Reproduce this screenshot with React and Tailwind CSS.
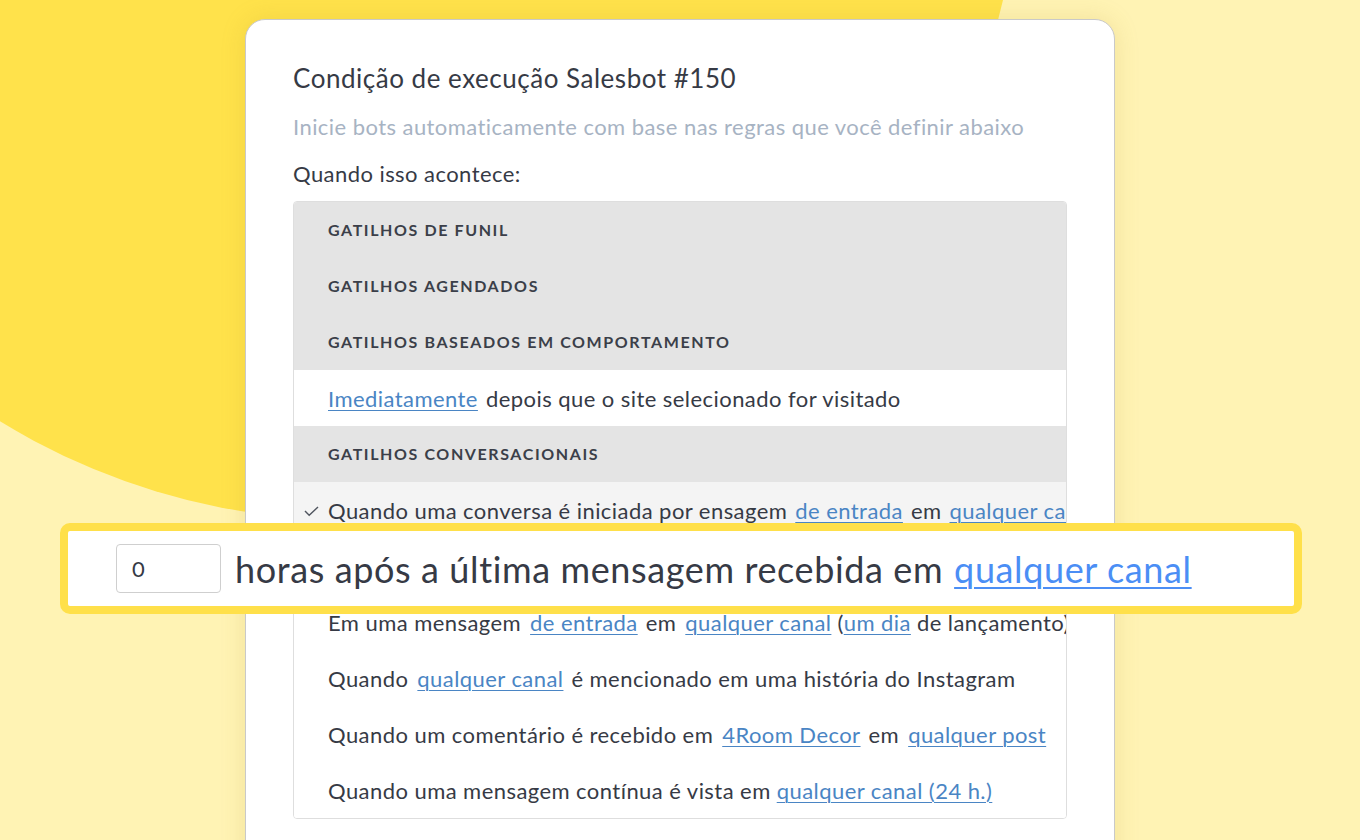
import React from 'react';

const A = ({ children, className = '' }) => (
  <a href="#" className={`text-[#4a85c4] underline underline-offset-[3px] decoration-1 ${className}`}>{children}</a>
);

const Header = ({ children }) => (
  <div className="h-[56px] flex items-center px-[34px] bg-[#e4e4e4] text-[16px] font-bold tracking-[0.1em] text-[#3b3f49] uppercase whitespace-nowrap">
    {children}
  </div>
);

const Row = ({ children, className = 'bg-white' }) => (
  <div className={`h-[56px] flex items-center px-[34px] text-[22px] tracking-[0.02em] text-[#363a45] whitespace-nowrap ${className}`}>
    {children}
  </div>
);

export default function App() {
  return (
    <div className="relative w-full h-[840px] overflow-hidden bg-[#fff3b4] font-['Lato','Roboto',sans-serif]">
      {/* background blob */}
      <div className="absolute left-[-320px] top-[-820px] w-[1340px] h-[1340px] rounded-full bg-[#ffe24b]" />

      <div className="relative mx-auto mt-[19px] w-[870px] h-[900px] bg-white rounded-[20px] border border-[#c9c9c9] shadow-[0_0_24px_rgba(180,150,40,0.18)] px-[47px] pt-[40px]">
        <h1 className="text-[26px] leading-[36px] tracking-[0.02em] text-[#363a45]">Condição de execução Salesbot #150</h1>
        <p className="mt-[17px] text-[22px] leading-[28px] tracking-[0.02em] text-[#a7b3c3] whitespace-nowrap">
          Inicie bots automaticamente com base nas regras que você definir abaixo
        </p>
        <p className="mt-[19px] text-[22px] leading-[28px] tracking-[0.02em] text-[#363a45]">Quando isso acontece:</p>

        <div className="mt-[13px] w-[774px] rounded-[4px] border border-[#dedede] overflow-hidden">
          <Header>Gatilhos de funil</Header>
          <Header>Gatilhos agendados</Header>
          <Header>Gatilhos baseados em comportamento</Header>
          <Row>
            <A>Imediatamente</A>
            <span className="ml-[8px]">depois que o site selecionado for visitado</span>
          </Row>
          <Header>Gatilhos conversacionais</Header>
          <Row className="bg-[#f4f4f4] relative">
            <span className="absolute left-[9px] top-[21px] text-[#50555f]">
              <svg width="17" height="16" viewBox="0 0 17 16" fill="none" stroke="currentColor" strokeWidth="1.4">
                <path d="M2 8l4.2 4.3L15 4" />
              </svg>
            </span>
            <span>Quando uma conversa é iniciada por ensagem</span>
            <A className="ml-[8px]">de entrada</A>
            <span className="ml-[8px]">em</span>
            <A className="ml-[8px]">qualquer canal</A>
          </Row>
          <Row>
            <span>0 horas após a última mensagem recebida em</span>
            <A className="ml-[8px]">qualquer canal</A>
          </Row>
          <Row>
            <span>Em uma mensagem</span>
            <A className="ml-[9px]">de entrada</A>
            <span className="ml-[8px]">em</span>
            <A className="ml-[9px]">qualquer canal</A>
            <span className="ml-[6px]">(</span>
            <A>um dia</A>
            <span className="ml-[6px]">de lançamento)</span>
          </Row>
          <Row>
            <span>Quando</span>
            <A className="ml-[9px]">qualquer canal</A>
            <span className="ml-[8px]">é mencionado em uma história do Instagram</span>
          </Row>
          <Row>
            <span>Quando um comentário é recebido em</span>
            <A className="ml-[9px]">4Room Decor</A>
            <span className="ml-[8px]">em</span>
            <A className="ml-[9px]">qualquer post</A>
          </Row>
          <Row>
            <span>Quando uma mensagem contínua é vista em</span>
            <A className="ml-[6px]">qualquer canal (24 h.)</A>
          </Row>
        </div>
      </div>

      {/* highlighted row */}
      <div className="absolute left-[60px] top-[523px] w-[1242px] h-[91px] rounded-[10px] border-[8px] border-[#ffe04a] bg-white flex items-center pl-[48px]">
        <div className="w-[105px] h-[49px] rounded-[4px] border border-[#cfcfcf] flex items-center pl-[15px] text-[22px] text-[#363a45]">
          0
        </div>
        <span className="ml-[14px] text-[36px] tracking-[0.017em] text-[#363a45] whitespace-nowrap">horas após a última mensagem recebida em</span>
        <a href="#" className="ml-[11px] text-[36px] tracking-[0.017em] text-[#4b8ef5] underline underline-offset-[4px] decoration-[1.5px] whitespace-nowrap">qualquer canal</a>
      </div>
    </div>
  );
}
